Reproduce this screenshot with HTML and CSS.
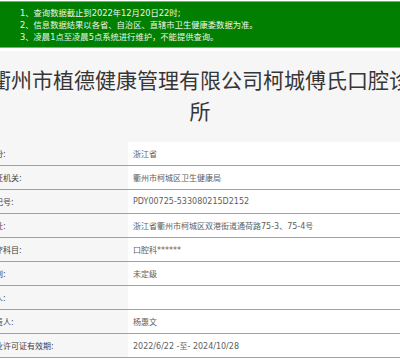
FILE: index.html
```html
<!DOCTYPE html>
<html lang="zh-CN">
<head>
    <meta charset="UTF-8">
    <meta name="viewport" content="width=device-width, initial-scale=1.0">
    <link rel="stylesheet" href="styles.css">
</head>
<body>

<div class="page">
    <div class="notice">
        <div class="notice-line">1、查询数据截止到2022年12月20日22时;</div>
        <div class="notice-line">2、信息数据结果以各省、自治区、直辖市卫生健康委数据为准。</div>
        <div class="notice-line">3、凌晨1点至凌晨5点系统进行维护，不能提供查询。</div>
    </div>

    <div class="head">
        <h1 class="title">衢州市植德健康管理有限公司柯城傅氏口腔诊所</h1>
    </div>

    <table class="info">
        <tr>
            <td class="label">省份:</td>
            <td class="value">浙江省</td>
        </tr>
        <tr>
            <td class="label">发证机关:</td>
            <td class="value">衢州市柯城区卫生健康局</td>
        </tr>
        <tr>
            <td class="label">登记号:</td>
            <td class="value">PDY00725-533080215D2152</td>
        </tr>
        <tr>
            <td class="label">地址:</td>
            <td class="value">浙江省衢州市柯城区双港街道通荷路75-3、75-4号</td>
        </tr>
        <tr>
            <td class="label">诊疗科目:</td>
            <td class="value">口腔科******</td>
        </tr>
        <tr>
            <td class="label">级别:</td>
            <td class="value">未定级</td>
        </tr>
        <tr>
            <td class="label">法人:</td>
            <td class="value"></td>
        </tr>
        <tr>
            <td class="label">负责人:</td>
            <td class="value">杨惠文</td>
        </tr>
        <tr>
            <td class="label">执业许可证有效期:</td>
            <td class="value">2022/6/22 -至- 2024/10/28</td>
        </tr>
    </table>
</div>

</body>
</html>
```

FILE: styles.css
```css
html, body {
    margin: 0;
    overflow: hidden;
    background: #fff;
}

.page {
    margin: 0 -16px;
    font-family: "DejaVu Sans", "Noto Sans CJK SC", sans-serif;
}

/* 顶部提示 */
.notice {
    margin-top: 1px;
    padding: 5px 0 4px 36px;
    background: #007f00;
    border-top: 1px solid #6cba6c;
    border-bottom: 1px solid #6cba6c;
    color: #eef7ee;
    font-size: 8.3px;
    line-height: 12px;
}

.head {
    margin-top: 3px;
    padding: 13px 4px 16px;
    background: #f6f6f6;
}

.title {
    margin: 0;
    font-family: "Noto Sans CJK SC", sans-serif;
    font-size: 21px;
    font-weight: normal;
    line-height: 31px;
    color: #363636;
    text-align: center;
}

/* 信息表 */
.info {
    width: 100%;
    border-collapse: collapse;
    font-size: 8px;
}

.info td {
    height: 23px;
    padding: 0;
    border-bottom: 1px solid #93a89f;
}

.label {
    width: 141px;
    padding-left: 3px !important;
    background: #f6f6f6;
    color: #404040;
}

.value {
    padding-left: 5px !important;
    background: #fff;
    color: #5e5e5e;
}
```
